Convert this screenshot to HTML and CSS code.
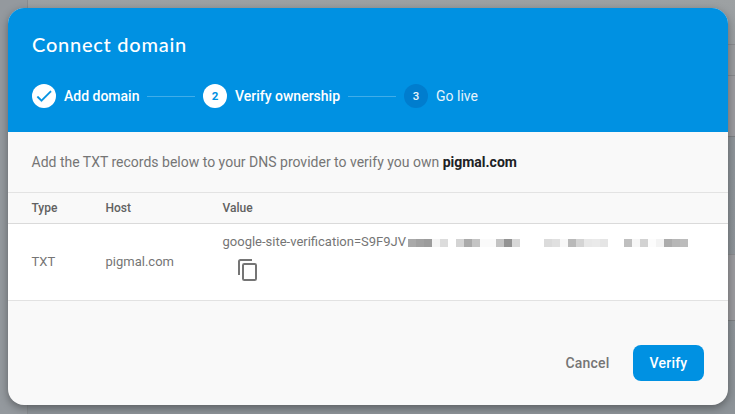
FILE: index.html
```
<!DOCTYPE html>
<html lang="en">
<head>
<meta charset="utf-8">
<title>Connect domain</title>
<link rel="stylesheet" href="styles.css">
</head>
<body>
<div class="backdrop">
  <div class="rail"></div>
  <div class="page"><div class="panel panel-top"></div><div class="panel panel-bottom"></div></div>
</div>
<main class="dialog">
  <header class="header">
    <h1 class="title">Connect domain</h1>
    <ol class="steps">
      <li class="step"><span class="badge"><svg width="20" height="20" viewBox="0 0 24 24"><path d="M9 16.17 4.83 12l-1.42 1.41L9 19 21 7l-1.41-1.41z" fill="#0091e2" stroke="#0091e2" stroke-width=".4"/></svg></span><span class="label label-add">Add domain</span></li>
      <li class="connector"></li>
      <li class="step"><span class="badge">2</span><span class="label label-verify">Verify ownership</span></li>
      <li class="connector"></li>
      <li class="step upcoming"><span class="badge">3</span><span class="label">Go live</span></li>
    </ol>
  </header>
  <p class="intro"><span>Add the TXT records below to your DNS provider to verify you own</span> <strong>pigmal.com</strong></p>
  <div class="row head"><span>Type</span><span>Host</span><span>Value</span></div>
  <div class="row record">
    <span class="cell">TXT</span><span class="cell">pigmal.com</span>
    <div class="value">
      <div class="code"><span class="code-text">google-site-verification=S9F9JV</span><span class="mask"></span></div>
      <svg class="copy" width="24" height="24" viewBox="0 0 24 24" fill="none" stroke="#757575" stroke-width="2"><path d="M16 2H4.500Q3 2 3 3.500V17"/><rect x="7" y="6" width="13" height="16" rx="1.300"/></svg>
    </div>
  </div>
  <footer class="actions"><button class="cancel">Cancel</button><button class="verify">Verify</button></footer>
</main>
</body>
</html>
```
FILE: styles.css
```
* { box-sizing: border-box; }
body { margin: 0; width: 735px; height: 414px; overflow: hidden; padding: 8px; background: #8e9498; font-family: Roboto, sans-serif; color: #757575; font-size: 14px; }
.backdrop { position: absolute; inset: 0; display: flex; }
.rail { width: 28px; background: #94999e; border-right: 1px solid #888c90; }
.page { flex: 1; background: linear-gradient(#9da1a3 0, #999da0 44px, #8e9499 137px, #8d9398 100%); padding-top: 44px; }
.panel { background: #9b9b9f; border-top: 1px solid #8a8b8e; border-bottom: 1px solid #7d8083; }
.panel-top { height: 93px; background: linear-gradient(#999b9e 30px, #87898c 30px, #87898c 31px, #9b9b9f 31px); }
.panel-bottom { height: 67px; margin-top: 117px; }
.dialog { position: relative; width: 720px; height: 397px; border-radius: 16px; overflow: hidden; background: #f9f9f9; box-shadow: 0 3px 9px rgba(0,0,0,.36); display: flex; flex-direction: column; }
.header { height: 124px; background: #0091e2; color: #fff; padding: 23px 24px 0; }
.title { margin: 0; font: 500 20px/26px Lato, sans-serif; letter-spacing: .75px; }
.steps { display: flex; align-items: center; list-style: none; margin: 27px 0 0; padding: 0; gap: 8px; }
.step { display: flex; align-items: center; gap: 8px; }
.badge { width: 24px; height: 24px; border-radius: 50%; background: #fff; color: #0091e2; display: flex; align-items: center; justify-content: center; font-size: 11.5px; font-weight: 700; }
.label { font-weight: 500; line-height: 24px; white-space: nowrap; }
.label-add { width: 75px; }
.label-verify { width: 105px; }
.connector { width: 48px; height: 1px; background: #40ade9; }
.upcoming .badge { background: #007dce; color: #e6f4fc; font-weight: 500; }
.upcoming .label { font-weight: 400; color: #e6f4fc; }
.intro { margin: 0; height: 60px; padding: 0 24px 0 23.5px; line-height: 61px; }
.intro strong { color: #202124; font-weight: 700; }
.row { display: grid; grid-template-columns: 74px 117px 1fr; padding: 0 24px 0 23.5px; align-items: center; }
.head { height: 32px; border-top: 1px solid #e3e3e3; border-bottom: 1px solid #dadada; font-size: 12px; font-weight: 500; color: #616161; }
.record { height: 77px; background: #fff; border-bottom: 1px solid #e2e2e2; font-size: 13px; }
.cell { padding-bottom: 2px; }
.value { height: 76px; padding-top: 9px; }
.code { display: flex; align-items: center; line-height: 17px; }
.code-text { width: 185.5px; white-space: nowrap; }
.mask { width: 280px; height: 8px; margin-top: 2px; background: linear-gradient(90deg, #a9a9a9 8px, #a1a1a1 8px 16px, #9c9c9c 16px 24px, #f4f4f4 24px 32px, #dcdcdc 32px 40px, #fff 40px 48px, #d4d4d4 48px 56px, #aaa 56px 64px, #c4c4c4 64px 72px, #fafafa 72px 88px, #c3c3c3 88px 96px, #939393 96px 104px, #d8d8d8 104px 112px, #fff 112px 136px, #dbdbdb 136px 144px, #e0e0e0 144px 152px, #f7f7f7 152px 160px, #b9b9b9 160px 168px, #d4d4d4 168px 176px, #e8e8e8 176px 184px, #eaeaea 184px 192px, #e5e5e5 192px 200px, #fff 200px 216px, #bfbfbf 216px 224px, #f6f6f6 224px 232px, #d2d2d2 232px 240px, #fcfcfc 240px 248px, #f3f3f3 248px 256px, #acacac 256px 264px, #b7b7b7 264px 272px, #bcbcbc 272px); }
.copy { display: block; margin: 8px 0 0 13.5px; }
.actions { display: flex; justify-content: flex-end; padding: 44px 24px 0; gap: 23.5px; }
.actions button { height: 36px; border: 0; padding: 0; font: 500 14px Roboto, sans-serif; letter-spacing: .2px; }
.cancel { background: none; color: #757575; }
.verify { width: 71px; border-radius: 8px; background: #0091e2; color: #fff; }
```
